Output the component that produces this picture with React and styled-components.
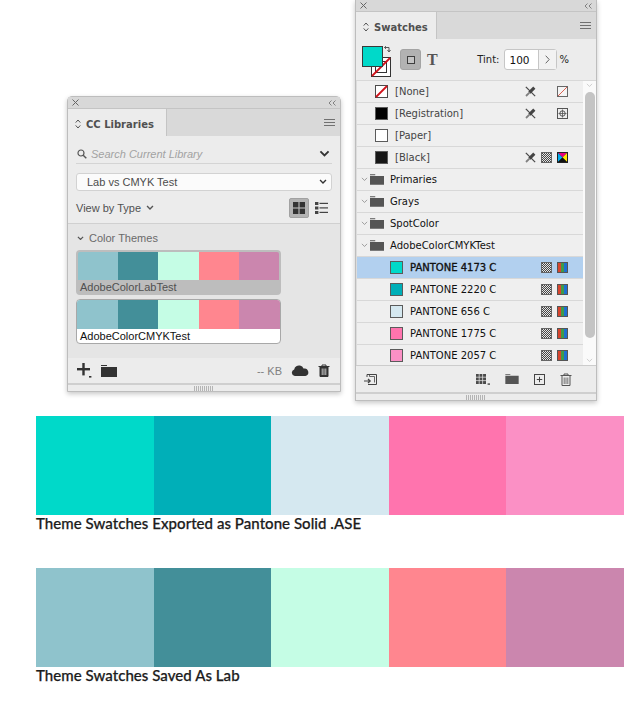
import styled, { createGlobalStyle } from "styled-components";

const GlobalStyle = createGlobalStyle`
  html, body {
    margin: 0;
    padding: 0;
    background: #fff;
  }
  * { box-sizing: border-box; }
`;

const Page = styled.div`
  width: 638px;
  height: 708px;
  overflow: hidden;
  display: flex;
  flex-direction: column;
`;
const Panels = styled.div`
  flex: none;
  display: flex;
  align-items: flex-start;
  gap: 14px;
  padding-left: 67px;
  height: 416px;
`;
const Panel = styled.section`
  width: ${(p) => p.$width}px;
  margin-top: ${(p) => p.$top || 0}px;
  background: #ececec;
  border: 1px solid #bdbdbd;
  border-top: ${(p) => (p.$top ? "1px solid #bdbdbd" : "none")};
  border-radius: ${(p) => (p.$top ? "5px 5px 0 0" : "0")};
  box-shadow: 0 2px 5px rgba(0, 0, 0, 0.22);
  display: flex;
  flex-direction: column;
  font-family: "Liberation Sans", Arial, sans-serif;
`;
const TitleBar = styled.div`
  height: 12px;
  background: #d8d8d8;
  border-bottom: 1px solid #c4c4c4;
  display: flex;
  align-items: center;
  justify-content: space-between;
  padding: 0 4px;
`;
const TabRow = styled.div`
  height: 27px;
  background: #d9d9d9;
  display: flex;
  align-items: stretch;
  justify-content: space-between;
`;
const Tab = styled.div`
  width: ${(p) => p.$width}px;
  background: #ececec;
  border-right: 1px solid #c4c4c4;
  display: flex;
  align-items: center;
  gap: 5px;
  padding: 3px 0 0 7px;
  font-family: "DejaVu Sans", sans-serif;
  font-size: 10px;
  font-weight: 700;
  color: #505050;
`;
const MenuLines = styled.div`
  align-self: center;
  width: 11px;
  height: 7px;
  margin-right: 5px;
  border-top: 1px solid #707070;
  border-bottom: 1px solid #707070;
  background: linear-gradient(#707070, #707070) center / 100% 1px no-repeat;
`;

const LibraryBody = styled.div`
  padding: 0 8px;
  background: #ececec;
`;
const SearchRow = styled.div`
  height: 28px;
  padding: 8px 2px 0 1px;
  border-bottom: 1px solid #d4d4d4;
  display: flex;
  align-items: center;
  gap: 4px;
`;
const SearchText = styled.span`
  flex: 1;
  font-size: 11px;
  font-style: italic;
  color: #a2a2a2;
`;
const Select = styled.div`
  height: 18px;
  margin-top: 9px;
  background: #fbfbfb;
  border: 1px solid #d2d2d2;
  border-radius: 3px;
  display: flex;
  align-items: center;
  justify-content: space-between;
  padding: 0 4px 0 10px;
  font-size: 11px;
  color: #4c4c4c;
`;
const ViewRow = styled.div`
  height: 32px;
  padding-top: 1px;
  display: flex;
  align-items: center;
  gap: 5px;
  font-size: 11px;
  color: #505050;
`;
const ViewToggles = styled.div`
  margin-left: auto;
  display: flex;
  align-items: center;
  gap: 6px;
  padding-right: 4px;
`;
const ViewToggle = styled.div`
  width: 20px;
  height: 20px;
  border-radius: 2px;
  background: ${(p) => (p.$on ? "#b3b3b3" : "transparent")};
  border: 1px solid ${(p) => (p.$on ? "#a2a2a2" : "transparent")};
  display: flex;
  align-items: center;
  justify-content: center;
`;
const ThemesArea = styled.div`
  height: 135px;
  background: #e5e5e5;
  border-top: 1px solid #d0d0d0;
  padding: 0 8px;
`;
const ThemesHead = styled.div`
  height: 26px;
  padding: 2px 0 0 1px;
  display: flex;
  align-items: center;
  gap: 5px;
  font-size: 11px;
  color: #6a6a6a;
`;
const ThemeCard = styled.div`
  width: 205px;
  height: 45px;
  margin-bottom: 4px;
  border-radius: 4px;
  overflow: hidden;
  display: flex;
  flex-direction: column;
  border-style: solid;
  border-color: ${(p) => (p.$selected ? "#bdbdbd" : "#a8a8a8")};
  border-width: ${(p) => (p.$selected ? "2px" : "1px")};
  background: ${(p) => (p.$selected ? "#bdbdbd" : "#fff")};
`;
const ThemeColors = styled.div`
  height: ${(p) => (p.$selected ? 28 : 29)}px;
  flex: none;
  display: flex;
`;
const Block = styled.div`
  flex: 1;
  background: ${(p) => p.$color};
`;
const ThemeName = styled.div`
  flex: 1;
  display: flex;
  align-items: center;
  padding-left: ${(p) => (p.$selected ? 2 : 3)}px;
  font-size: 11px;
  color: ${(p) => (p.$selected ? "#505050" : "#111")};
`;
const LibraryFooter = styled.div`
  height: 25px;
  display: flex;
  align-items: center;
  padding: 0 10px 0 9px;
  gap: 9px;
  background: #ececec;
  font-size: 11px;
  color: #808080;
`;
const FooterSpacer = styled.div`
  flex: 1;
`;
const Size = styled.span`
  white-space: nowrap;
`;
const Grip = styled.div`
  height: 8px;
  background: #ececec;
  border-top: 2px solid #cfcfcf;
  display: flex;
  align-items: center;
  justify-content: center;
`;
const GripLines = styled.div`
  width: 20px;
  height: 5px;
  background: repeating-linear-gradient(90deg, #b4b4b4 0 1px, transparent 1px 2px);
`;

const SwatchTools = styled.div`
  height: 41px;
  display: flex;
  align-items: center;
  padding: 0 0 0 6px;
  font-family: "DejaVu Sans", sans-serif;
`;
const FillStack = styled.div`
  position: relative;
  width: 31px;
  height: 31px;
  margin: 3px 7px 0 0;
`;
const FillFront = styled.div`
  position: absolute;
  left: 0;
  top: 0;
  width: 21px;
  height: 21px;
  background: #00d9c9;
  border: 1px solid #3a3a3a;
`;
const FillBack = styled.svg`
  position: absolute;
  right: 2px;
  bottom: 0;
`;
const SwapArrow = styled.svg`
  position: absolute;
  right: 2px;
  top: 0;
`;
const FormatToggle = styled.div`
  width: 21px;
  height: 21px;
  background: #b2b2b2;
  border: 1px solid #a4a4a4;
  border-radius: 3px;
  display: flex;
  align-items: center;
  justify-content: center;
`;
const FormatSquare = styled.div`
  width: 8px;
  height: 8px;
  background: #c4c4c4;
  border: 1px solid #3e3e3e;
`;
const TypeGlyph = styled.span`
  margin-left: 6px;
  font-family: "Liberation Serif", serif;
  font-size: 16px;
  font-weight: 700;
  color: #555;
`;
const TintLabel = styled.span`
  margin-left: auto;
  margin-right: 5px;
  font-size: 10px;
  color: #222;
`;
const TintField = styled.div`
  width: 53px;
  height: 21px;
  display: flex;
  background: #fff;
  border: 1px solid #c6c6c6;
  border-radius: 3px;
  font-size: 10.5px;
  color: #111;
`;
const TintValue = styled.div`
  width: 34px;
  display: flex;
  align-items: center;
  padding-left: 4px;
  border-right: 1px solid #c6c6c6;
`;
const TintStep = styled.div`
  flex: 1;
  background: #f2f2f2;
  display: flex;
  align-items: center;
  justify-content: center;
`;
const Percent = styled.span`
  margin: 0 27px 0 2px;
  font-size: 10px;
  color: #222;
`;
const ListArea = styled.div`
  display: flex;
  height: 286px;
  border-top: 1px solid #d8d8d8;
  border-bottom: 1px solid #cccccc;
  font-family: "DejaVu Sans", sans-serif;
`;
const Rows = styled.div`
  width: 227px;
  border-left: 1px solid #dcdcdc;
  overflow: hidden;
`;
const Row = styled.div`
  height: 22px;
  display: flex;
  align-items: center;
  padding-left: ${(p) => p.$indent}px;
  border-bottom: 1px solid #d8d8d8;
  background: ${(p) => (p.$active ? "#b2d0ef" : "#efefef")};
  font-size: 10px;
  color: ${(p) => (p.$muted ? "#444" : "#111")};
  -webkit-text-stroke: ${(p) => (p.$active ? "0.35px #111" : "0")};
`;
const Chip = styled.div`
  width: 13px;
  height: 13px;
  flex: none;
  margin-right: 7px;
  background: ${(p) => p.$color};
  border: 1px solid #5b5b5b;
`;
const NoneChip = styled.div`
  width: 13px;
  height: 13px;
  flex: none;
  margin-right: 7px;
  display: flex;
`;
const RowLabel = styled.span`
  flex: 1;
  white-space: nowrap;
`;
const RowIcons = styled.div`
  display: flex;
  align-items: center;
  gap: 5px;
  padding-right: 15px;
  -webkit-text-stroke: 0;
`;
const IconSlot = styled.div`
  width: 11px;
  height: 11px;
  display: flex;
  align-items: center;
  justify-content: center;
`;
const FolderToggle = styled.div`
  width: 8px;
  display: flex;
  justify-content: center;
  margin-right: 2px;
`;
const FolderName = styled.span`
  margin-left: 6px;
`;
const Scrollbar = styled.div`
  flex: 1;
  background: #fafafa;
  display: flex;
  flex-direction: column;
  align-items: center;
  justify-content: space-between;
  padding: 2px 0 2px;
`;
const ScrollThumb = styled.div`
  width: 10px;
  flex: 1;
  margin: 4px 0 20px;
  background: #c4c4c4;
  border-radius: 5px;
`;
const SwatchFooter = styled.div`
  height: 26px;
  display: flex;
  align-items: center;
  padding: 0 24px 0 8px;
  background: #ececec;
`;
const SwatchFooterRight = styled.div`
  margin-left: auto;
  display: flex;
  align-items: center;
  gap: 15px;
`;

const Strip = styled.div`
  width: 588px;
  height: 99px;
  margin-left: 36px;
  flex: none;
  display: flex;
`;
const Caption = styled.div`
  flex: none;
  height: 53px;
  margin-left: 36px;
  line-height: 17px;
  font-family: "Lato", sans-serif;
  font-size: 15px;
  font-weight: 500;
  -webkit-text-stroke: 0.25px #1c1c1c;
  letter-spacing: 0.05px;
  color: #1c1c1c;
`;

const Chevron = ({ size = 9, color = "#333", w = 1.6 }) => (
  <svg width={size} height={size * 0.66} viewBox="0 0 12 8">
    <path d="M1.5 1.5 6 6l4.5-4.5" fill="none" stroke={color} strokeWidth={w * 1.3} />
  </svg>
);
const CloseX = () => (
  <svg width="7" height="7" viewBox="0 0 7 7">
    <path d="M.5.5l6 6M6.5.5l-6 6" stroke="#666" strokeWidth="1" />
  </svg>
);
const Collapse = () => (
  <svg width="8" height="6" viewBox="0 0 8 6">
    <path d="M3.5.5 1 3l2.5 2.5M7.5.5 5 3l2.5 2.5" fill="none" stroke="#777" strokeWidth=".9" />
  </svg>
);
const UpDown = () => (
  <svg width="6" height="10" viewBox="0 0 6 10">
    <path d="M.7 3.6 3 1l2.3 2.6M.7 6.4 3 9l2.3-2.6" fill="none" stroke="#444" strokeWidth=".9" />
  </svg>
);
const SearchIcon = () => (
  <svg width="10" height="10" viewBox="0 0 10 10">
    <circle cx="4" cy="4" r="3" fill="none" stroke="#555" strokeWidth="1.2" />
    <path d="M6.2 6.2 9.3 9.3" stroke="#555" strokeWidth="1.4" />
  </svg>
);
const GridIcon = () => (
  <svg width="12" height="12" viewBox="0 0 12 12" fill="#333">
    <rect width="5.4" height="5.4" />
    <rect x="6.6" width="5.4" height="5.4" />
    <rect y="6.6" width="5.4" height="5.4" />
    <rect x="6.6" y="6.6" width="5.4" height="5.4" />
  </svg>
);
const ListIcon = () => (
  <svg width="13" height="12" viewBox="0 0 13 12" fill="#444">
    <rect width="3.4" height="3" />
    <rect x="4.5" y=".8" width="8.5" height="1.2" />
    <rect y="4.5" width="3.4" height="3" />
    <rect x="4.5" y="5.3" width="8.5" height="1.2" />
    <rect y="9" width="3.4" height="3" />
    <rect x="4.5" y="9.8" width="8.5" height="1.2" />
  </svg>
);
const PlusIcon = () => (
  <svg width="15" height="15" viewBox="0 0 15 15" fill="#333">
    <rect x="0" y="5" width="13" height="2.4" />
    <rect x="5.3" y="0" width="2.4" height="12.4" />
    <rect x="12" y="13" width="2.4" height="1.6" />
  </svg>
);
const FolderIcon = ({ width = 16, height = 12, color = "#333" }) => (
  <svg width={width} height={height} viewBox="0 0 16 12" fill={color}>
    <path d="M0 0h6v1H0zM0 2h16v10H0z" />
  </svg>
);
const CloudIcon = () => (
  <svg width="18" height="11" viewBox="0 0 18 11">
    <path d="M3.8 11A3.4 3.4 0 0 1 3.2 4.4 4.8 4.8 0 0 1 9 .6a4.3 4.3 0 0 1 3.5 3A3.8 3.8 0 0 1 14.4 11z" fill="#333" />
  </svg>
);
const TrashIcon = ({ color = "#333", solid = true }) => (
  <svg width="12" height="13" viewBox="0 0 12 13">
    <path d="M.5 2.5h11M4 2.5V1h4v1.5" fill="none" stroke={color} strokeWidth="1" />
    <path d="M2 3v9.5h8V3" fill={solid ? color : "none"} stroke={color} strokeWidth="1" />
    <path d="M4.2 4.5v6.5M6 4.5v6.5M7.8 4.5v6.5" stroke={solid ? "#ececec" : color} strokeWidth=".8" />
  </svg>
);
const NoFill = () => (
  <svg width="13" height="13" viewBox="0 0 13 13">
    <rect x=".5" y=".5" width="12" height="12" fill="#fff" stroke="#4a4a4a" />
    <path d="M1 12 12 1" stroke="#d0121b" strokeWidth="1.8" />
  </svg>
);
const NoFillSmall = () => (
  <svg width="11" height="11" viewBox="0 0 11 11">
    <rect x=".5" y=".5" width="10" height="10" fill="#f4f4f4" stroke="#666" />
    <path d="M1 10 10 1" stroke="#d8503f" strokeWidth=".9" />
  </svg>
);
// pencil running up to the right, struck through from the top left
const NoEdit = () => (
  <svg width="13" height="13" viewBox="0 0 13 13">
    <path d="M1 1 12 12" stroke="#4a4a4a" strokeWidth="1.5" />
    <path d="M11 2 5.2 7.8" stroke="#444" strokeWidth="3.6" />
    <path d="M5.2 7.8 1.2 11.8" stroke="#808080" strokeWidth="2.2" />
  </svg>
);
const RegMark = () => (
  <svg width="11" height="11" viewBox="0 0 11 11" fill="none" stroke="#555">
    <rect x=".5" y=".5" width="10" height="10" />
    <circle cx="5.5" cy="5.5" r="2.7" />
    <path d="M5.5 1.5v8M1.5 5.5h8" strokeWidth=".8" />
  </svg>
);
const Halftone = ({ id }) => (
  <svg width="11" height="11" viewBox="0 0 11 11">
    <defs>
      <pattern id={id} width="2" height="2" patternUnits="userSpaceOnUse">
        <rect width="2" height="2" fill="#e4e4e4" />
        <rect width="1" height="1" fill="#444" />
        <rect x="1" y="1" width="1" height="1" fill="#444" />
      </pattern>
    </defs>
    <rect x=".5" y=".5" width="10" height="10" fill={`url(#${id})`} stroke="#666" />
  </svg>
);
const Cmyk = () => (
  <svg width="11" height="11" viewBox="0 0 11 11">
    <rect width="11" height="11" fill="#222" />
    <path d="M1 1h9L5.5 5.5z" fill="#e6007e" />
    <path d="M1 1v9l4.5-4.5z" fill="#00aeef" />
    <path d="M10 1v9L5.5 5.5z" fill="#ffe600" />
    <path d="M1 10h9L5.5 5.5z" fill="#111" />
  </svg>
);
const Spot = () => (
  <svg width="11" height="11" viewBox="0 0 11 11">
    <rect width="11" height="11" fill="#555" />
    <rect x="1" y="1" width="3" height="9" fill="#d8452e" />
    <rect x="4" y="1" width="3" height="9" fill="#3f9a4a" />
    <rect x="7" y="1" width="3" height="9" fill="#1e6fd0" />
  </svg>
);
const ImportIcon = () => (
  <svg width="13" height="13" viewBox="0 0 13 13" fill="none" stroke="#444">
    <path d="M3 4V1.5h9.5v10H4" />
    <path d="M5.5 1.5v2h5v6" strokeWidth=".8" />
    <path d="M0 8h6M4 6l2.2 2L4 10" strokeWidth="1.2" />
  </svg>
);
const ColorGroupIcon = () => (
  <svg width="14" height="11" viewBox="0 0 14 11" fill="#4a4a4a">
    <rect width="10" height="10" />
    <path d="M3.2 0v10M6.6 0v10M0 3.2h10M0 6.6h10" stroke="#ececec" strokeWidth=".7" />
    <rect x="11.6" y="9.4" width="2.4" height="1.4" />
  </svg>
);
const NewIcon = () => (
  <svg width="11" height="11" viewBox="0 0 11 11" fill="none" stroke="#444">
    <rect x=".5" y=".5" width="10" height="10" />
    <path d="M5.5 2.8v5.4M2.8 5.5h5.4" />
  </svg>
);

const labColors = ["#8fc3cc", "#438f99", "#c5fde5", "#ff868f", "#cb86ae"];
const pantoneColors = ["#00d9c9", "#00afb8", "#d5e8f0", "#ff74ae", "#fb90c5"];

const basics = [
  { name: "[None]", none: true, icons: ["noedit", "gap", "nofill"] },
  { name: "[Registration]", color: "#000", icons: ["noedit", "gap", "reg"] },
  { name: "[Paper]", color: "#fff", icons: [] },
  { name: "[Black]", color: "#161616", icons: ["noedit", "half", "cmyk"] },
];
const groups = ["Primaries", "Grays", "SpotColor", "AdobeColorCMYKTest"];
const pantones = [
  { name: "PANTONE 4173 C", color: "#00d9c9", active: true },
  { name: "PANTONE 2220 C", color: "#00afb8" },
  { name: "PANTONE 656 C", color: "#d5e8f0" },
  { name: "PANTONE 1775 C", color: "#ff74ae" },
  { name: "PANTONE 2057 C", color: "#fb90c5" },
];

const RowIcon = ({ type, id }) => {
  if (type === "gap") return null;
  if (type === "noedit") return <NoEdit />;
  if (type === "nofill") return <NoFillSmall />;
  if (type === "reg") return <RegMark />;
  if (type === "half") return <Halftone id={id} />;
  if (type === "cmyk") return <Cmyk />;
  return <Spot />;
};

const LibrariesPanel = () => (
  <Panel $width={274} $top={96}>
    <TitleBar>
      <CloseX />
      <Collapse />
    </TitleBar>
    <TabRow>
      <Tab $width={99}>
        <UpDown />
        CC Libraries
      </Tab>
      <MenuLines />
    </TabRow>
    <LibraryBody>
      <SearchRow>
        <SearchIcon />
        <SearchText>Search Current Library</SearchText>
        <Chevron size={11} />
      </SearchRow>
      <Select>
        Lab vs CMYK Test
        <Chevron size={8} />
      </Select>
      <ViewRow>
        View by Type
        <Chevron size={8} color="#555" />
        <ViewToggles>
          <ViewToggle $on>
            <GridIcon />
          </ViewToggle>
          <ListIcon />
        </ViewToggles>
      </ViewRow>
    </LibraryBody>
    <ThemesArea>
      <ThemesHead>
        <Chevron size={7} color="#555" />
        Color Themes
      </ThemesHead>
      <ThemeCard $selected>
        <ThemeColors $selected>
          {labColors.map((c) => (
            <Block key={c} $color={c} />
          ))}
        </ThemeColors>
        <ThemeName $selected>AdobeColorLabTest</ThemeName>
      </ThemeCard>
      <ThemeCard>
        <ThemeColors>
          {labColors.map((c) => (
            <Block key={c} $color={c} />
          ))}
        </ThemeColors>
        <ThemeName>AdobeColorCMYKTest</ThemeName>
      </ThemeCard>
    </ThemesArea>
    <LibraryFooter>
      <PlusIcon />
      <FolderIcon />
      <FooterSpacer />
      <Size>-- KB</Size>
      <CloudIcon />
      <TrashIcon />
    </LibraryFooter>
    <Grip>
      <GripLines />
    </Grip>
  </Panel>
);

const SwatchesPanel = () => (
  <Panel $width={242}>
    <TitleBar>
      <CloseX />
      <Collapse />
    </TitleBar>
    <TabRow>
      <Tab $width={81}>
        <UpDown />
        Swatches
      </Tab>
      <MenuLines />
    </TabRow>
    <SwatchTools>
      <FillStack>
        <FillBack width="20" height="20" viewBox="0 0 20 20">
          <rect x=".5" y=".5" width="19" height="19" fill="#fff" stroke="#333" />
          <rect x="4.5" y="4.5" width="11" height="11" fill="none" stroke="#333" />
          <path d="M1 19 19 1" stroke="#d0121b" strokeWidth="1.8" />
        </FillBack>
        <FillFront />
        <SwapArrow width="7" height="7" viewBox="0 0 7 7">
          <path d="M.5 1.5h4.5v4M3.5 4 5 6l1.5-2M2 .2.5 1.5 2 2.8" fill="none" stroke="#555" />
        </SwapArrow>
      </FillStack>
      <FormatToggle>
        <FormatSquare />
      </FormatToggle>
      <TypeGlyph>T</TypeGlyph>
      <TintLabel>Tint:</TintLabel>
      <TintField>
        <TintValue>100</TintValue>
        <TintStep>
          <svg width="5" height="9" viewBox="0 0 5 9">
            <path d="M.7.7 4.2 4.5.7 8.3" fill="none" stroke="#666" />
          </svg>
        </TintStep>
      </TintField>
      <Percent>%</Percent>
    </SwatchTools>
    <ListArea>
      <Rows>
        {basics.map((s) => (
          <Row key={s.name} $indent={18} $muted>
            {s.none ? (
              <NoneChip>
                <NoFill />
              </NoneChip>
            ) : (
              <Chip $color={s.color} />
            )}
            <RowLabel>{s.name}</RowLabel>
            <RowIcons>
              {s.icons.map((t) => (
                <IconSlot key={t}>
                  <RowIcon type={t} id={`half-${s.color}`} />
                </IconSlot>
              ))}
            </RowIcons>
          </Row>
        ))}
        {groups.map((g) => (
          <Row key={g} $indent={3}>
            <FolderToggle>
              <Chevron size={7} color="#777" w={0.9} />
            </FolderToggle>
            <FolderIcon width={14} height={11} color="#555" />
            <FolderName>{g}</FolderName>
          </Row>
        ))}
        {pantones.map((s) => (
          <Row key={s.name} $indent={33} $active={s.active}>
            <Chip $color={s.color} />
            <RowLabel>{s.name}</RowLabel>
            <RowIcons>
              <IconSlot>
                <Halftone id={`half-${s.color}`} />
              </IconSlot>
              <IconSlot>
                <Spot />
              </IconSlot>
            </RowIcons>
          </Row>
        ))}
      </Rows>
      <Scrollbar>
        <Chevron size={7} color="#bbb" w={0.9} />
        <ScrollThumb />
        <Chevron size={7} color="#bbb" w={0.9} />
      </Scrollbar>
    </ListArea>
    <SwatchFooter>
      <ImportIcon />
      <SwatchFooterRight>
        <ColorGroupIcon />
        <FolderIcon width={14} height={10} color="#555" />
        <NewIcon />
        <TrashIcon color="#555" solid={false} />
      </SwatchFooterRight>
    </SwatchFooter>
    <Grip>
      <GripLines />
    </Grip>
  </Panel>
);

export default function App() {
  return (
    <Page>
      <GlobalStyle />
      <Panels>
        <LibrariesPanel />
        <SwatchesPanel />
      </Panels>
      <Strip>
        {pantoneColors.map((c) => (
          <Block key={c} $color={c} />
        ))}
      </Strip>
      <Caption>Theme Swatches Exported as Pantone Solid .ASE</Caption>
      <Strip>
        {labColors.map((c) => (
          <Block key={c} $color={c} />
        ))}
      </Strip>
      <Caption>Theme Swatches Saved As Lab</Caption>
    </Page>
  );
}
